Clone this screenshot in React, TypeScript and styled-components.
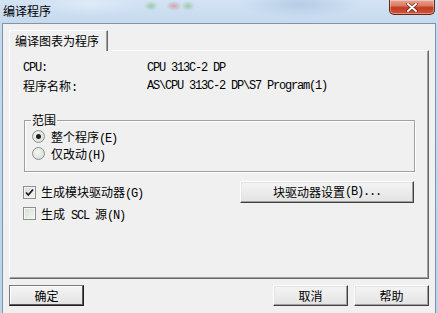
import React from "react";
import styled, { createGlobalStyle, css } from "styled-components";

const GlobalStyle = createGlobalStyle`
  html, body {
    margin: 0;
    padding: 0;
  }
  body {
    width: 438px;
    height: 313px;
    overflow: hidden;
    font-family: "Noto Sans CJK SC", "Liberation Sans", sans-serif;
    font-size: 12px;
    color: #000;
  }
`;

const Window = styled.div`
  width: 438px;
  height: 313px;
  display: flex;
  flex-direction: column;
  overflow: hidden;
  background: linear-gradient(180deg, #d0e1f3 0px, #c5d9ee 30px, #bcd3eb 100%);
`;

const TitleBar = styled.div`
  flex: none;
  height: 23px;
  display: flex;
  align-items: flex-start;
  padding-left: 3px;
  background:
    radial-gradient(ellipse 7px 5px at 151px 6px, rgba(110, 185, 110, 0.55), transparent),
    radial-gradient(ellipse 8px 5px at 174px 6px, rgba(205, 110, 110, 0.5), transparent),
    radial-gradient(ellipse 7px 5px at 188px 6px, rgba(110, 180, 110, 0.5), transparent),
    radial-gradient(ellipse 60px 14px at 300px 4px, rgba(150, 180, 215, 0.45), transparent),
    radial-gradient(ellipse 50px 12px at 90px 4px, rgba(230, 240, 250, 0.6), transparent),
    linear-gradient(180deg, #d3e3f4, #c6d9ee);
`;

const Title = styled.div`
  margin-top: 4px;
  line-height: 13px;
  font-size: 12px;
`;

const CloseButton = styled.div`
  margin-left: auto;
  margin-right: 3px;
  width: 46px;
  height: 15px;
  box-sizing: border-box;
  border: 1px solid #6b2418;
  border-top: none;
  border-radius: 0 0 5px 5px;
  background: linear-gradient(180deg, #e8a595 0%, #d97a63 40%, #c23b22 55%, #d0573a 100%);
  box-shadow: inset 0 0 0 1px rgba(255, 255, 255, 0.35);
  display: flex;
  align-items: center;
  justify-content: center;
`;

const Client = styled.div`
  flex: 1;
  margin: 0 2px;
  border: 1px solid #7f93a9;
  border-bottom: none;
  background: #f0f0f0;
  padding: 6px 6px 0 6px;
  display: flex;
  flex-direction: column;
`;

const Tab = styled.div`
  align-self: flex-start;
  position: relative;
  z-index: 1;
  height: 21px;
  box-sizing: border-box;
  margin-bottom: -1px;
  padding: 2px 8px 0 5px;
  background: #f0f0f0;
  border: 1px solid;
  border-color: #ffffff #696969 #f0f0f0 #ffffff;
  border-bottom: none;
  box-shadow: inset -1px 0 0 #a0a0a0;
  line-height: 16px;
`;

const Panel = styled.div`
  height: 229px;
  box-sizing: border-box;
  padding: 8px 14px 0 13px;
  border: 1px solid;
  border-color: #ffffff #696969 #696969 #ffffff;
  box-shadow: inset -1px -1px 0 #a0a0a0;
  display: flex;
  flex-direction: column;
`;

const InfoGrid = styled.div`
  display: grid;
  grid-template-columns: 124px auto;
  line-height: 18px;
`;

const Lat = styled.span`
  font-family: "Liberation Mono", monospace;
  font-size: 12px;
  letter-spacing: -1.2px;
`;

const GroupBox = styled.fieldset`
  margin: 17px -1px 0 1px;
  padding: 2px 0 9px 6px;
  min-width: 0;
  border: 1px solid #a0a0a0;
  box-shadow: 1px 1px 0 #ffffff, inset 1px 1px 0 #ffffff;
`;

const Legend = styled.legend`
  padding: 0 1px;
  line-height: 12px;
`;

const RadioRow = styled.label`
  height: 17px;
  display: flex;
  align-items: center;
  gap: 6px;
  padding-left: 1px;
`;

const RadioCircle = styled.span<{ $checked?: boolean }>`
  width: 13px;
  height: 13px;
  box-sizing: border-box;
  border-radius: 50%;
  border: 1px solid #8e8f8f;
  background: radial-gradient(circle at 40% 40%, #f5f8f3 0%, #dde6da 60%, #cbd6c8 100%);
  display: flex;
  align-items: center;
  justify-content: center;

  &::after {
    content: "";
    width: 5px;
    height: 5px;
    border-radius: 50%;
    background: #1c1c1c;
    display: ${(p) => (p.$checked ? "block" : "none")};
  }
`;

const OptionRow = styled.div<{ $tall?: boolean }>`
  display: flex;
  align-items: center;
  height: ${(p) => (p.$tall ? "22px" : "17px")};
  margin-top: ${(p) => (p.$tall ? "9px" : "2px")};
`;

const CheckLabel = styled.label`
  display: flex;
  align-items: center;
  gap: 5px;
`;

const CheckBox = styled.span`
  width: 13px;
  height: 13px;
  box-sizing: border-box;
  border: 1px solid #8e8f8f;
  background: linear-gradient(135deg, #d4ddd1 0%, #e9eee7 60%, #f3f6f2 100%);
  box-shadow: inset 0 0 0 1px #f4f4f4;
  display: flex;
  align-items: center;
  justify-content: center;
`;

const Button = styled.button<{ $default?: boolean; $wide?: boolean }>`
  width: ${(p) => (p.$wide ? "174px" : "75px")};
  height: ${(p) => (p.$wide ? "22px" : "21px")};
  box-sizing: border-box;
  padding: 0;
  font: inherit;
  font-size: 12px;
  line-height: 12px;
  color: #000;
  background: linear-gradient(180deg, #f4f4f4 0%, #ececec 50%, #e2e2e2 100%);
  border: 1px solid;
  border-color: #ffffff #404040 #404040 #ffffff;
  box-shadow: inset -1px -1px 0 #a0a0a0, inset 1px 1px 0 #e3e3e3;
  display: flex;
  align-items: center;
  justify-content: center;

  ${(p) =>
    p.$default &&
    css`
      border-color: #7a7a7a #1e1e1e #1e1e1e #7a7a7a;
      box-shadow: inset -1px -1px 0 #5a5a5a, inset 1px 1px 0 #ffffff;
    `}
`;

const WideButton = styled(Button)`
  margin-left: auto;
`;

const ButtonBar = styled.div`
  display: flex;
  gap: 6px;
  margin-top: 6px;
`;

const Spacer = styled.div`
  flex: 1;
`;

const CloseIcon = () => (
  <svg width="12" height="9" viewBox="0 0 12 9">
    <path d="M2 1 L10 8 M10 1 L2 8" stroke="#5a1a10" strokeWidth="3.2" strokeLinecap="round" />
    <path d="M2 1 L10 8 M10 1 L2 8" stroke="#ffffff" strokeWidth="2" strokeLinecap="round" />
  </svg>
);

const CheckMark = () => (
  <svg width="9" height="9" viewBox="0 0 9 9">
    <path d="M1 4.5 L3.3 7 L8 1.5" fill="none" stroke="#1e1e1e" strokeWidth="1.8" />
  </svg>
);

export default function App() {
  return (
    <>
      <GlobalStyle />
      <Window>
        <TitleBar>
          <Title>编译程序</Title>
          <CloseButton>
            <CloseIcon />
          </CloseButton>
        </TitleBar>
        <Client>
          <Tab>编译图表为程序</Tab>
          <Panel>
            <InfoGrid>
              <Lat>CPU:</Lat>
              <Lat>CPU 313C-2 DP</Lat>
              <span>
                程序名称<Lat>:</Lat>
              </span>
              <Lat>AS\CPU 313C-2 DP\S7 Program(1)</Lat>
            </InfoGrid>

            <GroupBox>
              <Legend>范围</Legend>
              <RadioRow>
                <RadioCircle $checked />
                <span>
                  整个程序<Lat>(E)</Lat>
                </span>
              </RadioRow>
              <RadioRow>
                <RadioCircle />
                <span>
                  仅改动<Lat>(H)</Lat>
                </span>
              </RadioRow>
            </GroupBox>

            <OptionRow $tall>
              <CheckLabel>
                <CheckBox>
                  <CheckMark />
                </CheckBox>
                <span>
                  生成模块驱动器<Lat>(G)</Lat>
                </span>
              </CheckLabel>
              <WideButton $wide>
                块驱动器设置<Lat>(B)...</Lat>
              </WideButton>
            </OptionRow>
            <OptionRow>
              <CheckLabel>
                <CheckBox />
                <span>
                  生成<Lat> SCL </Lat>源<Lat>(N)</Lat>
                </span>
              </CheckLabel>
            </OptionRow>
          </Panel>
          <ButtonBar>
            <Button $default>确定</Button>
            <Spacer />
            <Button>取消</Button>
            <Button>帮助</Button>
          </ButtonBar>
        </Client>
      </Window>
    </>
  );
}
